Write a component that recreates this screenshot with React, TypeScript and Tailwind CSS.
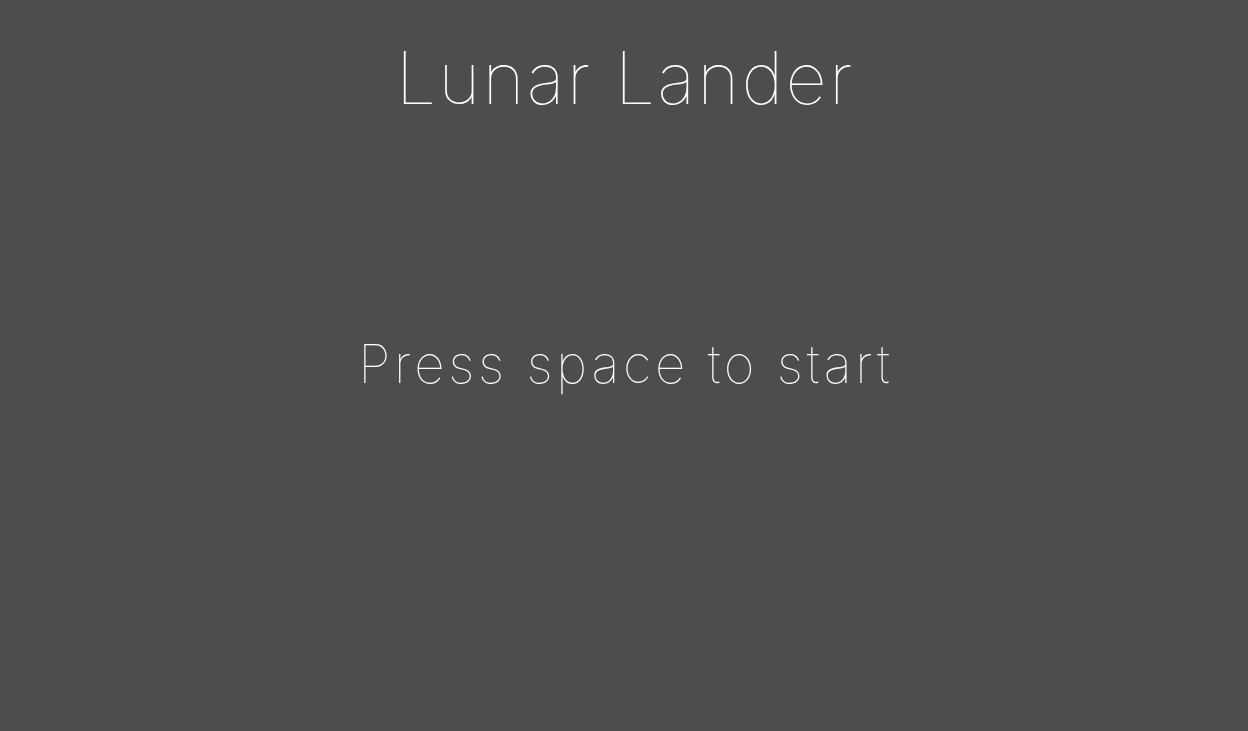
import React from 'react';

export default function App() {
  return (
    <div className="w-full h-[731px] bg-[#4d4d4d] text-white flex flex-col items-center overflow-hidden font-['Inter',sans-serif]">
      <h1 className="mt-[30px] pl-[0.03em] text-[72px] leading-[96px] font-thin tracking-[0.03em]">Lunar Lander</h1>
      <p className="mt-[202px] pl-[0.07em] text-[53px] leading-[72px] font-thin tracking-[0.07em]">Press space to start</p>
    </div>
  );
}
